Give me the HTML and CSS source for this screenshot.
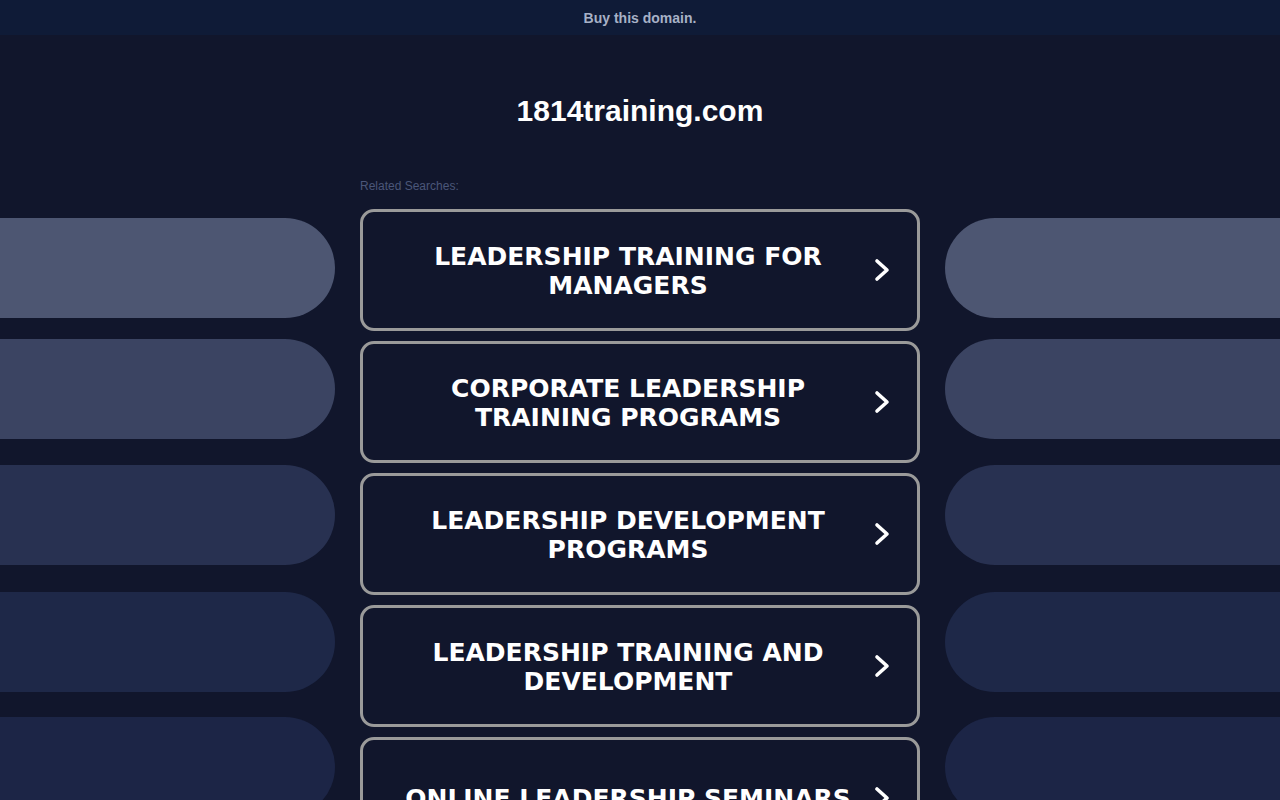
FILE: index.html
```html
<!DOCTYPE html>
<html lang="en">
<head>
<meta charset="utf-8">
<title>1814training.com</title>
<link rel="stylesheet" href="styles.css">
</head>
<body>
<div class="topbar"><a class="buy" href="#">Buy this domain.</a></div>
<div class="page">
  <div class="side side-left">
    <div class="pill p1"></div>
    <div class="pill p2"></div>
    <div class="pill p3"></div>
    <div class="pill p4"></div>
    <div class="pill p5"></div>
  </div>
  <div class="center">
    <h1 class="domain">1814training.com</h1>
    <div class="related">Related Searches:</div>
    <div class="list">
      <a class="item" href="#"><span class="label">LEADERSHIP TRAINING FOR MANAGERS</span><svg class="arrow" viewBox="0 0 16 24"><path d="M3 3 L13 12 L3 21" fill="none" stroke="#fff" stroke-width="3.6" stroke-linecap="round" stroke-linejoin="round"/></svg></a>
      <a class="item" href="#"><span class="label">CORPORATE LEADERSHIP TRAINING PROGRAMS</span><svg class="arrow" viewBox="0 0 16 24"><path d="M3 3 L13 12 L3 21" fill="none" stroke="#fff" stroke-width="3.6" stroke-linecap="round" stroke-linejoin="round"/></svg></a>
      <a class="item" href="#"><span class="label">LEADERSHIP DEVELOPMENT PROGRAMS</span><svg class="arrow" viewBox="0 0 16 24"><path d="M3 3 L13 12 L3 21" fill="none" stroke="#fff" stroke-width="3.6" stroke-linecap="round" stroke-linejoin="round"/></svg></a>
      <a class="item" href="#"><span class="label">LEADERSHIP TRAINING AND DEVELOPMENT</span><svg class="arrow" viewBox="0 0 16 24"><path d="M3 3 L13 12 L3 21" fill="none" stroke="#fff" stroke-width="3.6" stroke-linecap="round" stroke-linejoin="round"/></svg></a>
      <a class="item" href="#"><span class="label">ONLINE LEADERSHIP SEMINARS</span><svg class="arrow" viewBox="0 0 16 24"><path d="M3 3 L13 12 L3 21" fill="none" stroke="#fff" stroke-width="3.6" stroke-linecap="round" stroke-linejoin="round"/></svg></a>
    </div>
  </div>
  <div class="side side-right">
    <div class="pill p1"></div>
    <div class="pill p2"></div>
    <div class="pill p3"></div>
    <div class="pill p4"></div>
    <div class="pill p5"></div>
  </div>
</div>
</body>
</html>
```
FILE: styles.css
```css
html, body {
  margin: 0;
  padding: 0;
  background: #11162c;
  height: 100%;
  overflow: hidden;
}
body {
  font-family: "Liberation Sans", Arial, sans-serif;
}
.topbar {
  height: 35px;
  background: #0f1b37;
  display: flex;
  align-items: center;
  justify-content: center;
}
.buy {
  color: #a7b1c6;
  font-weight: bold;
  font-size: 14px;
  text-decoration: none;
  line-height: 16px;
  margin-top: 1px;
}
.page {
  display: grid;
  grid-template-columns: 335px 560px 335px;
  column-gap: 25px;
}
.center {
  display: flex;
  flex-direction: column;
}
.domain {
  margin: 58px 0 0 0;
  text-align: center;
  color: #ffffff;
  font-size: 30px;
  font-weight: bold;
  line-height: 36px;
}
.related {
  margin-top: 50px;
  color: #4b5679;
  font-size: 12px;
  line-height: 14px;
}
.list {
  margin-top: 16px;
  display: flex;
  flex-direction: column;
  gap: 10px;
}
.item {
  box-sizing: border-box;
  height: 122px;
  border: 3px solid #9a9a9a;
  border-radius: 14px;
  display: flex;
  align-items: center;
  padding: 0 27px 0 35px;
  text-decoration: none;
  flex-shrink: 0;
}
.label {
  width: 460px;
  text-align: center;
  color: #ffffff;
  font-family: "DejaVu Sans", Verdana, sans-serif;
  font-weight: bold;
  font-size: 25px;
  line-height: 29px;
  margin-top: 1px;
}
.arrow {
  width: 16px;
  height: 24px;
  margin-left: 16px;
  flex-shrink: 0;
}
.side {
  padding-top: 183px;
  display: flex;
  flex-direction: column;
}
.pill {
  height: 100px;
  flex-shrink: 0;
}
.side-left .pill {
  border-radius: 0 50px 50px 0;
}
.side-right .pill {
  border-radius: 50px 0 0 50px;
}
.p1 { background: #4d5672; }
.p2 { background: #3b4462; margin-top: 21px; }
.p3 { background: #283151; margin-top: 26px; }
.p4 { background: #1e2848; margin-top: 27px; }
.p5 { background: #1c2546; margin-top: 25px; }
```
